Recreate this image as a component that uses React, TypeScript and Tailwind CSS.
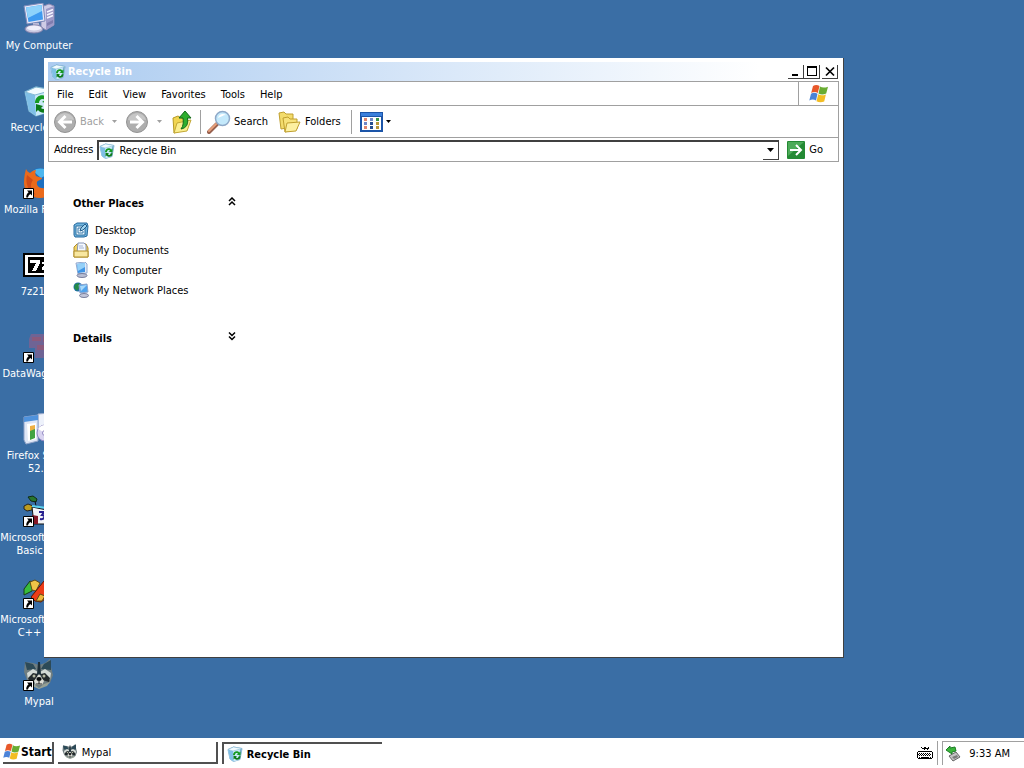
import { useState } from 'react';
import type { ReactNode } from 'react';

interface IconProps {
  className?: string;
}

function ShortcutArrow() {
  return (
    <g>
      <path d="M0.500 21.500h10v10h-10z" fill="#fff" stroke="#000" strokeWidth="1" />
      <path d="M4 23.500h5v5L7.400 27C6 28 5.300 29 5 30.500H3.200C3.200 28 4 26.500 5.600 25.200z" fill="#000" />
    </g>
  );
}

function ComputerIcon({ className = 'h-8 w-8' }: IconProps) {
  return (
    <svg viewBox="0 0 32 32" className={className} aria-hidden="true">
      <path d="M18 4l8-3 5 2v19l-8 5-5-3z" fill="#cfcce6" stroke="#8c8ab4" />
      <path d="M23 6l8-3v19l-8 5z" fill="#9d9ac8" />
      <path d="M24 9l6-2.500M24 12l6-2.500M24 15l6-2.500" stroke="#f4f4ff" strokeWidth="1.500" />
      <path d="M24 20l6-3v3l-6 3z" fill="#7f7cae" />
      <path d="M1 3l19-3 2 18L4 21z" fill="#e4e6f6" stroke="#7c88b8" />
      <path d="M3 4.500L18.500 2 20 16.500 5.500 19z" fill="#3f9af0" />
      <path d="M3 4.500L18.500 2 19 8 5 15z" fill="#8ed2fb" />
      <path d="M10 20h6l1 5h-7z" fill="#b9bad8" />
      <ellipse cx="11" cy="26" rx="9" ry="4" fill="#c9c8e0" stroke="#8482ac" />
      <ellipse cx="11" cy="25" rx="7" ry="2.500" fill="#f0effa" />
    </svg>
  );
}

function RecycleIcon({ className = 'h-4 w-4' }: IconProps) {
  return (
    <svg viewBox="0 0 32 32" className={className} aria-hidden="true">
      <path d="M2 7l11-5 17 3-4 22-13 4-7-5z" fill="#b5def2" stroke="#5d97bd" strokeWidth="1.500" />
      <path d="M2 7l10 3 18-5-4 22-13 4-7-5z" fill="#cbe9f8" />
      <path d="M2 7l10 3 1 21-7-5z" fill="#7fbfe6" />
      <path d="M26 27l4-22-4 2-3 21z" fill="#79aecb" />
      <path d="M2 7l11-5 17 3-18 5z" fill="#f2fbff" stroke="#83b9d4" />
      <path d="M12 18c0-8 9-10 13-5l2-2v8l-8-2 3-2c-2-2-6-1-6 3z" fill="#159a20" />
      <path d="M27 20c0 8-8 10-12 5l-2 2v-8l7 2-2 2c2 2 5 1 5-2z" fill="#0c7a18" />
    </svg>
  );
}

function FirefoxIcon() {
  return (
    <svg viewBox="0 0 32 32" className="h-8 w-8" aria-hidden="true">
      <circle cx="17" cy="14" r="13" fill="#1c6fc0" />
      <path d="M10 4c5-4 13-3 17 2l-9 5z" fill="#4db6ee" />
      <path d="M3 2c1 2 2 3 4 4 2-2 4-3 6-3-1 2-1 4 0 6l6 2c0 2-4 2-5 4-1 4 3 7 8 6 5-1 7-4 8-8 2 10-4 18-13 18S1 25 1 16C1 10 2 6 3 2z" fill="#ea6a1b" />
      <path d="M4 8c-2 8 1 17 9 20-6-6-6-11-3-15z" fill="#d04c18" />
      <ShortcutArrow />
    </svg>
  );
}

function SevenZipIcon() {
  return (
    <svg viewBox="0 0 32 32" className="h-8 w-8" shapeRendering="crispEdges" aria-hidden="true">
      <path d="M0 4h32v24H0z" fill="#000" />
      <path d="M2 6h28v20H2z" fill="#fff" />
      <path d="M5 8h22v16H5z" fill="#000" />
      <path d="M7 11h10v3l-4 8h-4l4-8H7z" fill="#fff" />
      <path d="M19 13h6v2l-3 4h3v2h-6v-2l3-4h-3z" fill="#fff" />
    </svg>
  );
}

function WagonIcon() {
  return (
    <svg viewBox="0 0 32 32" className="h-8 w-8" aria-hidden="true">
      <path d="M8 3h20v24H12V17H6V8z" fill="#6f6495" />
      <path d="M9 6h9v4H9zM14 14h9v5h-9zM20 5h8v6h-8z" fill="#8b5a7c" />
      <ShortcutArrow />
    </svg>
  );
}

function InstallerIcon() {
  return (
    <svg viewBox="0 0 32 32" className="h-8 w-8" aria-hidden="true">
      <path d="M15 1l12-1v20l-12 4z" fill="#eef2fb" stroke="#9aaacb" />
      <path d="M1 4l14-2v26l-12 3-2-4z" fill="#dfe7f6" stroke="#8fa3c8" />
      <path d="M1 4l14-2v5L1 9z" fill="#4f92dc" />
      <path d="M4 11l9-1v16l-8 2z" fill="#fff" />
      <path d="M7 17l5-2v10l-5 2z" fill="#42a343" />
      <path d="M7 13l5-1v4l-5 2z" fill="#efb043" />
      <circle cx="22" cy="20" r="8" fill="#d8d3f0" stroke="#9187c2" />
      <path d="M22 20l-7-4c2-3 4-4 7-4z" fill="#fff" />
      <circle cx="22" cy="20" r="2.500" fill="#fff" stroke="#9187c2" />
    </svg>
  );
}

function VisualBasicIcon() {
  return (
    <svg viewBox="0 0 32 32" className="h-8 w-8" aria-hidden="true">
      <path d="M5 2l5-1 4 3-1 3-5-1z" fill="#28762f" stroke="#102b14" />
      <path d="M12 6l1 5" stroke="#111" />
      <path d="M1 11l4-2 5 2-1 4-5 1-3-2z" fill="#bd9c20" stroke="#222" />
      <path d="M9 12l20 4v13H11z" fill="#f3f4f6" stroke="#111" />
      <path d="M9 11l22 3" stroke="#5ad1ef" strokeWidth="2" />
      <path d="M16 17h5l-2 3c4 0 3 5-2 4" stroke="#282090" strokeWidth="2" fill="none" />
      <path d="M9 20l6 1v8h-4z" fill="#861827" />
      <ShortcutArrow />
    </svg>
  );
}

function VisualCIcon() {
  return (
    <svg viewBox="0 0 32 32" className="h-8 w-8" aria-hidden="true">
      <path d="M1 12l6-8 4 3-2 7-8 4z" fill="#39bd3c" stroke="#183d18" />
      <path d="M7 5l5-2 5 3-4 8-4-1z" fill="#efc447" stroke="#5f4b17" />
      <path d="M8 20L21 4l10 2v9L18 25l-6-1z" fill="#ed3c18" stroke="#601400" />
      <path d="M17 17l5 2-3 5h-6z" fill="#efb83b" stroke="#5f4b17" />
      <ShortcutArrow />
    </svg>
  );
}

function RaccoonIcon({ className = 'h-8 w-8', shortcut = false }: IconProps & { shortcut?: boolean }) {
  return (
    <svg viewBox="0 0 32 32" className={className} aria-hidden="true">
      <path d="M2 3l8 1 6 2 6-2 5-4 1 8 2 8-3 8-6 3-5 2-6-3-6-5-3-8z" fill="#6f7d80" />
      <path d="M2 3l8 2 3 5-9 1zM28 1l-7 4-3 5 10 1z" fill="#2c4a58" />
      <path d="M4 14l6-4 5 3-3 4-7 4zM28 14l-6-4-5 3 3 4 7 4z" fill="#d4dad6" />
      <path d="M5 19l5-5 5 1-2 6-7 2zM27 19l-5-5-4 1 1 6 7 2z" fill="#23292c" />
      <path d="M15 3h2l1 13h-4z" fill="#1d2e38" />
      <path d="M16 15l5 7-2 4h-6l-2-4z" fill="#dcdcd4" />
      <path d="M4 22l7 3 5 4 5-4 6-2-3 4-8 3-7-3z" fill="#97a094" />
      <circle cx="11" cy="17" r="1.500" fill="#b5b9a4" />
      <circle cx="21" cy="17" r="1.500" fill="#b5b9a4" />
      <ellipse cx="16" cy="20" rx="2.600" ry="2" fill="#080b0d" />
      <path d="M16 22v3M13 25h6" stroke="#222" />
      {shortcut && <ShortcutArrow />}
    </svg>
  );
}

function WindowsFlag({ className = 'h-5 w-5' }: IconProps) {
  return (
    <svg viewBox="0 0 20 20" className={className} aria-hidden="true">
      <path d="M4 2c2-1.500 4.500-1.500 6.500 0L8.800 9c-2-1.300-4.500-1.300-6.600 0z" fill="#e8582a" />
      <path d="M11 2.500c2 1.400 4.800 1.400 8 .2L17.200 9.500c-2.700 1.300-5.500 1.200-7.700 0z" fill="#69ac32" />
      <path d="M2 9.800c2-1.300 4.300-1.300 6.500 0L7 16.500c-2.200-1.400-4.500-1.300-6.700 0z" fill="#4b83d8" />
      <path d="M9.200 10.300c2.200 1.300 5 1.300 7.700.1L15.200 17.500c-2.700 1.200-5.500 1-7.700-.3z" fill="#f3bd23" />
    </svg>
  );
}

function RoundArrow({ flip = false }: { flip?: boolean }) {
  return (
    <svg viewBox="0 0 24 24" className="h-6 w-6" aria-hidden="true">
      <circle cx="12" cy="12" r="10.500" fill="#aeaeae" stroke="#949494" />
      <path d="M3 10c2-9 16-9 18 0-5-2-11 2-18 0z" fill="#c6c6c6" />
      <path
        d={flip ? 'M5 12h12M11.500 6l6 6-6 6' : 'M19 12H7M12.500 6l-6 6 6 6'}
        fill="none"
        stroke="#fff"
        strokeWidth="3"
      />
    </svg>
  );
}

function UpFolderIcon() {
  return (
    <svg viewBox="0 0 24 24" className="h-6 w-6" aria-hidden="true">
      <path d="M3 8l5-2 3 2 6 0v11L4 23z" fill="#f1d551" stroke="#b69a25" />
      <path d="M7 13l14-3-4 11-13 2z" fill="#fbee8e" stroke="#c3a836" />
      <path d="M9 8l6-7 6 7h-3.500c1 6-1 10-6.500 11 2.500-3 2.500-7 2-11z" fill="#2fae2f" stroke="#12691a" />
    </svg>
  );
}

function SearchIcon() {
  return (
    <svg viewBox="0 0 24 24" className="h-6 w-6" aria-hidden="true">
      <path d="M2 22l8-8" stroke="#96604e" strokeWidth="4" strokeLinecap="round" />
      <path d="M2 21l7-7" stroke="#e8a07c" strokeWidth="2" strokeLinecap="round" />
      <circle cx="15.500" cy="8.500" r="7" fill="#c4e9fb" stroke="#8ea9c8" strokeWidth="1.500" />
      <path d="M11 8c1-4 5-5 8-3-3 0-5 2-8 3z" fill="#fff" />
    </svg>
  );
}

function FoldersIcon() {
  return (
    <svg viewBox="0 0 24 24" className="h-6 w-6" aria-hidden="true">
      <path d="M1 3l5-1 2 2h7v13L3 19z" fill="#f3dc6c" stroke="#c0a030" />
      <path d="M5 8l5-1 2 2h7v10L7 22z" fill="#f7e27a" stroke="#c0a030" />
      <path d="M9 13l13-1-4 9-11 1z" fill="#fdf0a0" stroke="#c0a030" />
    </svg>
  );
}

function ViewsIcon() {
  return (
    <svg viewBox="0 0 24 20" className="h-5 w-6" shapeRendering="crispEdges" aria-hidden="true">
      <path d="M0 0h23v20H0z" fill="#1c55a8" />
      <path d="M1 1h21v3H1z" fill="#3b80dc" />
      <path d="M2 5h19v13H2z" fill="#fff" />
      <path d="M4 6h3v3H4zM4 14h3v3H4z" fill="#e0856e" />
      <path d="M10 6h3v3h-3zM4 10h3v3H4z" fill="#6f87c7" />
      <path d="M16 6h3v3h-3z" fill="#379347" />
      <path d="M10 10h3v3h-3zM10 14h3v3h-3z" fill="#254d91" />
      <path d="M16 10h3v3h-3zM16 14h3v3h-3z" fill="#b99638" />
    </svg>
  );
}

function Caret({ className = 'h-[3px] w-[5px] text-black' }: IconProps) {
  return (
    <svg viewBox="0 0 7 4" className={className} aria-hidden="true">
      <path d="M0 0h7L3.500 4z" fill="currentColor" />
    </svg>
  );
}

function DesktopIcon() {
  return (
    <svg viewBox="0 0 16 16" className="h-4 w-4" aria-hidden="true">
      <path d="M1 3l3-2h10l1 3-1 10-3 1H2l-1-2z" fill="#6fb4de" stroke="#27699e" />
      <path d="M3 4h9v9H3z" fill="#eaf7ff" stroke="#2f6e9e" />
      <path d="M5 6h3M5 11V6M5 11h5V9" stroke="#3a78a8" fill="none" />
      <path d="M7 9l1-3 4-4 2 2-4 4z" fill="#9fd3ee" stroke="#235c8c" />
    </svg>
  );
}

function DocumentsIcon() {
  return (
    <svg viewBox="0 0 16 16" className="h-4 w-4" aria-hidden="true">
      <path d="M1 5l3-3h9l2 4v9H1z" fill="#f0d368" stroke="#b08d29" />
      <path d="M5 1h6l2 2v8H4z" fill="#f6faff" stroke="#8896b8" />
      <path d="M6 4h4M6 6h5" stroke="#a4b4d4" />
      <path d="M1 9h14v6H1z" fill="#f8e7a0" stroke="#b08d29" />
    </svg>
  );
}

function SmallComputerIcon() {
  return (
    <svg viewBox="0 0 16 16" className="h-4 w-4" aria-hidden="true">
      <path d="M3 1l9-1 2 2v9l-9 1z" fill="#dfe8f6" stroke="#8fa8cf" />
      <path d="M4 2l8-1v9l-7 1z" fill="#3f95e6" />
      <path d="M4 2l8-1v4L5 9z" fill="#94d0f8" />
      <ellipse cx="9" cy="13.500" rx="5" ry="2" fill="#b9bfd4" stroke="#787e9c" />
    </svg>
  );
}

function NetworkIcon() {
  return (
    <svg viewBox="0 0 16 16" className="h-4 w-4" aria-hidden="true">
      <circle cx="5" cy="5" r="4.500" fill="#1f6cb0" />
      <path d="M2 2l4-1 1 4-3 4-3-3z" fill="#258a48" />
      <path d="M6 3l8-1 1 8-8 1z" fill="#4fa4ee" stroke="#8fa4cb" />
      <path d="M7 4l7-1-6 6z" fill="#a9d9fa" />
      <ellipse cx="11" cy="13.500" rx="4.500" ry="2" fill="#c2c6da" stroke="#787e9c" />
    </svg>
  );
}

function Chevrons({ down = false }: { down?: boolean }) {
  return (
    <svg viewBox="0 0 8 9" className="h-[9px] w-2" aria-hidden="true">
      <path
        d={down ? 'M1 .500L4 3.500 7 .500M1 4.500l3 3 3-3' : 'M1 4L4 1l3 3M1 8l3-3 3 3'}
        fill="none"
        stroke="#000"
        strokeWidth="1.500"
      />
    </svg>
  );
}

function KeyboardIcon() {
  return (
    <svg viewBox="0 0 16 14" className="h-3.5 w-4" shapeRendering="crispEdges" aria-hidden="true">
      <path d="M4 1h1v1h2V1h2v1h2V1h1v2h-1v1h-1V3H8v1H7V3H5V2H4z" fill="#000" />
      <path d="M1 5h14v1h1v6h-1v1H1v-1H0V6h1z" fill="#000" />
      <path d="M1 6h14v6H1z" fill="#fff" />
      <path d="M2 7.500h12M2 9.500h12" stroke="#000" strokeWidth="1" strokeDasharray="1 1" />
      <path d="M1 8.500h14" stroke="#000" strokeDasharray="1 1" />
      <path d="M2 11h1M4 11h8M13 11h1" stroke="#000" />
    </svg>
  );
}

function EjectIcon() {
  return (
    <svg viewBox="0 0 16 16" className="h-4 w-4" aria-hidden="true">
      <path d="M4 10l7-4 4 5-7 4z" fill="#c4c4c4" stroke="#666" />
      <path d="M7 11l5-2 1 2-4 2z" fill="#7b7b7b" />
      <path d="M1 4l4-4v2l5-1 1 4-4 1v2z" fill="#3bb53b" stroke="#1b7d24" />
    </svg>
  );
}

const shortcuts: { name: string[]; icon: ReactNode }[] = [
  { name: ['My Computer'], icon: <ComputerIcon /> },
  { name: ['Recycle Bin'], icon: <RecycleIcon className="h-8 w-8" /> },
  { name: ['Mozilla Firefox'], icon: <FirefoxIcon /> },
  { name: ['7z2107'], icon: <SevenZipIcon /> },
  { name: ['DataWagon 21'], icon: <WagonIcon /> },
  { name: ['Firefox Setup', '52.9'], icon: <InstallerIcon /> },
  { name: ['Microsoft Visual', 'Basic 6.0'], icon: <VisualBasicIcon /> },
  { name: ['Microsoft Visual', 'C++ 6.0'], icon: <VisualCIcon /> },
  { name: ['Mypal'], icon: <RaccoonIcon shortcut /> },
];

const menus = ['File', 'Edit', 'View', 'Favorites', 'Tools', 'Help'];

const places = [
  { name: 'Desktop', icon: <DesktopIcon /> },
  { name: 'My Documents', icon: <DocumentsIcon /> },
  { name: 'My Computer', icon: <SmallComputerIcon /> },
  { name: 'My Network Places', icon: <NetworkIcon /> },
];

function CaptionButton({ label, children }: { label: string; children: ReactNode }) {
  return (
    <button
      type="button"
      aria-label={label}
      className="flex h-3.5 w-4 items-center justify-center border-r border-b border-[#404040] bg-white"
    >
      <svg viewBox="0 0 12 11" className="h-[11px] w-3" aria-hidden="true">
        {children}
      </svg>
    </button>
  );
}

function ExplorerWindow() {
  const [address, setAddress] = useState('Recycle Bin');
  const [placesOpen, setPlacesOpen] = useState(true);

  return (
    <section
      aria-label="Recycle Bin"
      className="absolute top-[58px] right-[180px] bottom-[80px] left-[44px] flex flex-col border-r border-b border-[#404040] bg-white p-1"
    >
      <div className="flex h-[19px] shrink-0 items-center bg-linear-to-r from-[#abcbf0] to-white to-90% pr-px pl-0.5">
        <RecycleIcon />
        <h1 className="ml-0.5 flex-1 font-bold text-white">Recycle Bin</h1>
        <CaptionButton label="Minimize">
          <path d="M2 8h6v2H2z" fill="#000" />
        </CaptionButton>
        <CaptionButton label="Maximize">
          <path d="M1 0h10v10H1zM2 2v7h8V2z" fill="#000" fillRule="evenodd" />
        </CaptionButton>
        <span className="w-0.5" />
        <CaptionButton label="Close">
          <path d="M2 1.500l8 8M10 1.500l-8 8" stroke="#000" strokeWidth="1.700" />
        </CaptionButton>
      </div>

      <div className="shrink-0 border border-[#a0a0a0]">
        <div className="flex h-6 border-b border-[#a0a0a0]">
          <nav className="flex flex-1 items-center gap-[15px] pt-0.5 pl-2">
            {menus.map((menu) => (
              <button key={menu} type="button">
                {menu}
              </button>
            ))}
          </nav>
          <div className="flex w-10 items-center justify-center border-l border-[#a0a0a0]">
            <WindowsFlag />
          </div>
        </div>

        <div className="flex h-8 items-center border-b border-[#a0a0a0] pl-1">
          <button type="button" disabled className="flex items-center gap-[3px] text-[#a0a0a0]">
            <RoundArrow />
            Back
          </button>
          <button type="button" aria-label="Back history" disabled className="px-2">
            <Caret className="h-[3px] w-[5px] text-[#a0a0a0]" />
          </button>
          <button type="button" aria-label="Forward" disabled>
            <RoundArrow flip />
          </button>
          <button type="button" aria-label="Forward history" disabled className="px-2">
            <Caret className="h-[3px] w-[5px] text-[#a0a0a0]" />
          </button>
          <button type="button" aria-label="Up">
            <UpFolderIcon />
          </button>
          <span className="mx-1.5 h-6 border-l border-[#a0a0a0]" />
          <button type="button" className="flex items-center gap-[3px]">
            <SearchIcon />
            Search
          </button>
          <button type="button" className="ml-2.5 flex items-center gap-[3px]">
            <FoldersIcon />
            Folders
          </button>
          <span className="mr-2 ml-2.5 h-6 border-l border-[#a0a0a0]" />
          <button type="button" aria-label="Views" className="flex items-center gap-0.5">
            <ViewsIcon />
            <Caret />
          </button>
        </div>

        <div className="flex h-[23px] items-center pl-[5px]">
          <label htmlFor="address">Address</label>
          <div className="ml-1 flex h-5 flex-1 items-center border-t-2 border-l-2 border-[#404040]">
            <RecycleIcon />
            <input
              id="address"
              value={address}
              onChange={(e) => setAddress(e.target.value)}
              className="ml-1 min-w-0 flex-1 outline-none"
            />
            <button
              type="button"
              aria-label="Address list"
              className="flex h-[18px] w-4 items-center justify-center border-r border-b border-[#404040]"
            >
              <Caret className="h-1 w-[7px] text-black" />
            </button>
          </div>
          <button type="button" className="mr-[15px] ml-2 flex items-center gap-1">
            <svg viewBox="0 0 18 18" className="h-[18px] w-[18px]" aria-hidden="true">
              <rect width="18" height="18" rx="1" fill="#248a34" />
              <path d="M1 1h16L1 15z" fill="#4dab59" />
              <path d="M3 9h10M9 4l5 5-5 5" fill="none" stroke="#fff" strokeWidth="2" />
            </svg>
            Go
          </button>
        </div>
      </div>

      <aside className="w-[188px] pt-[35px] pl-[25px]">
        <div className="flex items-start justify-between">
          <h2 className="font-bold">Other Places</h2>
          <button type="button" aria-label="Toggle Other Places" onClick={() => setPlacesOpen(!placesOpen)}>
            <Chevrons down={!placesOpen} />
          </button>
        </div>
        {placesOpen && (
          <ul className="mt-2.5">
            {places.map((place) => (
              <li key={place.name}>
                <a href="#" className="flex h-5 items-center gap-1.5 whitespace-nowrap">
                  {place.icon}
                  {place.name}
                </a>
              </li>
            ))}
          </ul>
        )}
        <div className="mt-8 flex items-start justify-between">
          <h2 className="font-bold">Details</h2>
          <button type="button" aria-label="Toggle Details">
            <Chevrons down />
          </button>
        </div>
      </aside>
    </section>
  );
}

export default function App() {
  return (
    <div className="flex h-screen flex-col overflow-hidden bg-[#3a6ea5] font-['DejaVu_Sans_Condensed','DejaVu_Sans',sans-serif] text-[11px] leading-[13px] text-black">
      <main className="relative min-h-0 flex-1">
        <ul className="w-[78px] pt-[3px]">
          {shortcuts.map((item) => (
            <li key={item.name.join(' ')} className="h-[82px]">
              <a href="#" className="flex flex-col items-center text-white">
                {item.icon}
                <span className="mt-1 flex flex-col items-center whitespace-nowrap">
                  {item.name.map((line) => (
                    <span key={line}>{line}</span>
                  ))}
                </span>
              </a>
            </li>
          ))}
        </ul>
        <ExplorerWindow />
      </main>

      <footer className="flex h-[30px] shrink-0 items-center gap-1 bg-white pl-[3px]">
        <button
          type="button"
          className="flex h-[22px] items-center border-r-2 border-b-2 border-[#505050] text-xs font-bold"
        >
          <WindowsFlag className="h-[18px] w-[18px]" />
          Start
        </button>
        <button
          type="button"
          className="flex h-[22px] w-40 items-center gap-1 border-r-2 border-b-2 border-[#505050] pl-1"
        >
          <RaccoonIcon className="h-4 w-4" />
          Mypal
        </button>
        <button
          type="button"
          className="flex h-[22px] w-40 items-center gap-1 border-t-2 border-l-2 border-[#505050] pl-[3px] font-bold"
        >
          <RecycleIcon />
          Recycle Bin
        </button>
        <div className="ml-auto flex items-center gap-1">
          <KeyboardIcon />
          <span className="h-6 border-l border-[#a0a0a0]" />
          <div className="flex h-6 items-center gap-2 border-t border-l border-[#a0a0a0] pr-3.5 pl-0.5">
            <EjectIcon />
            <time>9:33 AM</time>
          </div>
        </div>
      </footer>
    </div>
  );
}
